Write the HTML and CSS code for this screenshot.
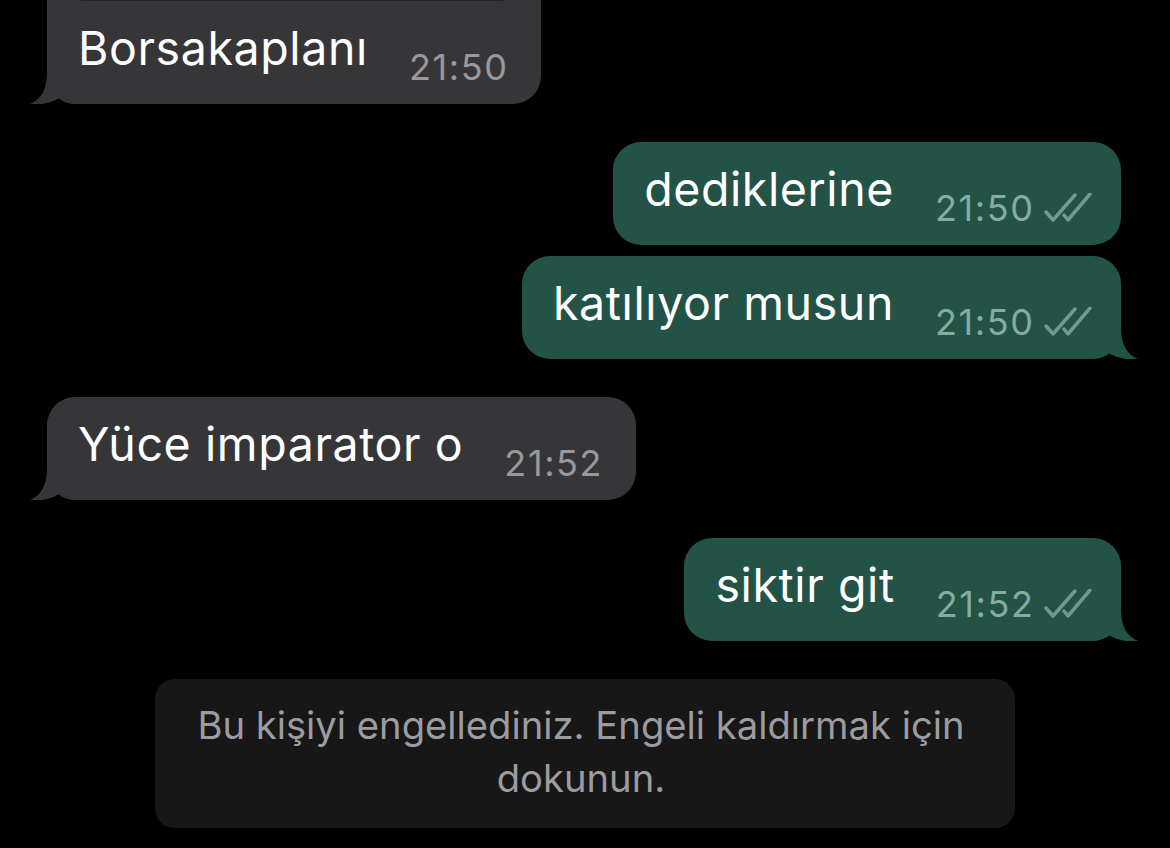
FILE: index.html
```html
<!DOCTYPE html>
<html lang="tr">
<head>
<meta charset="utf-8">
<link rel="stylesheet" href="styles.css">
</head>
<body>
<div class="chat">
  <div class="row in first">
    <div class="bubble dark tail">
      <div class="quote"></div>
      <div class="content">
        <span class="text">Borsakaplanı</span>
        <span class="meta"><span class="time">21:50</span></span>
      </div>
      <svg class="tail-svg" viewBox="0 0 50 40" width="50" height="40"><path d="M0,0 H30 V8 C30,26 36,35 47,40 C38,41 27,40 18,34 C13,38 7,40 0,40 Z"/></svg>
    </div>
  </div>

  <div class="row out gap-l">
    <div class="bubble green">
      <div class="content">
        <span class="text">dediklerine</span>
        <span class="meta"><span class="time">21:50</span>
          <svg class="ticks" viewBox="0 0 50 30" width="50" height="30"><path d="M4,19 L11,27 L33,2 M22,22 L26,27 L48,1"/></svg>
        </span>
      </div>
    </div>
  </div>

  <div class="row out gap-s">
    <div class="bubble green tail">
      <div class="content">
        <span class="text">katılıyor musun</span>
        <span class="meta"><span class="time">21:50</span>
          <svg class="ticks" viewBox="0 0 50 30" width="50" height="30"><path d="M4,19 L11,27 L33,2 M22,22 L26,27 L48,1"/></svg>
        </span>
      </div>
      <svg class="tail-svg" viewBox="0 0 50 40" width="50" height="40"><path d="M0,0 H30 V8 C30,26 36,35 47,40 C38,41 27,40 18,34 C13,38 7,40 0,40 Z"/></svg>
    </div>
  </div>

  <div class="row in gap-l">
    <div class="bubble dark tail">
      <div class="content">
        <span class="text">Yüce imparator o</span>
        <span class="meta"><span class="time">21:52</span></span>
      </div>
      <svg class="tail-svg" viewBox="0 0 50 40" width="50" height="40"><path d="M0,0 H30 V8 C30,26 36,35 47,40 C38,41 27,40 18,34 C13,38 7,40 0,40 Z"/></svg>
    </div>
  </div>

  <div class="row out gap-l">
    <div class="bubble green tail">
      <div class="content">
        <span class="text">siktir git</span>
        <span class="meta"><span class="time">21:52</span>
          <svg class="ticks" viewBox="0 0 50 30" width="50" height="30"><path d="M4,19 L11,27 L33,2 M22,22 L26,27 L48,1"/></svg>
        </span>
      </div>
      <svg class="tail-svg" viewBox="0 0 50 40" width="50" height="40"><path d="M0,0 H30 V8 C30,26 36,35 47,40 C38,41 27,40 18,34 C13,38 7,40 0,40 Z"/></svg>
    </div>
  </div>

  <div class="notice">Bu kişiyi engellediniz. Engeli kaldırmak için dokunun.</div>
</div>
</body>
</html>
```

FILE: styles.css
```css
* { box-sizing: border-box; }
html, body { margin: 0; padding: 0; background: #000; }
body {
  width: 1170px;
  height: 848px;
  overflow: hidden;
  font-family: Inter, "Noto Sans", sans-serif;
}
.chat {
  display: flex;
  flex-direction: column;
  margin-top: -61px;
}
.row { display: flex; }
.row.in { justify-content: flex-start; padding-left: 47px; }
.row.out { justify-content: flex-end; padding-right: 49px; }
.gap-l { margin-top: 38px; }
.gap-s { margin-top: 11px; }

.bubble {
  position: relative;
  border-radius: 28px;
  padding: 0 31px 0 31px;
}
.bubble.dark { background: #363638; padding-right: 34px; }
.bubble.green { background: #225346; padding-right: 29px; }

.quote {
  height: 62px;
  margin: 0 -8px 0 -8px;
  background: #252527;
  border-radius: 0 0 14px 14px;
}

.content {
  display: flex;
  align-items: flex-end;
  height: 103px;
  padding-bottom: 26px;
}
.text {
  color: #fff;
  font-size: 46.5px;
  line-height: 60px;
  letter-spacing: 0.6px;
}
.meta {
  display: flex;
  align-items: center;
  margin-left: 41px;
  margin-bottom: -7px;
  height: 36px;
}
.time {
  font-size: 36px;
  line-height: 36px;
  letter-spacing: 1.6px;
  margin-right: -1.6px;
}
.dark .time { color: #98989d; }
.green .time { color: #86aba1; }
.ticks {
  margin-left: 9px;
  fill: none;
  stroke: #6f9a8e;
  stroke-width: 3.5;
  stroke-linecap: round;
  stroke-linejoin: round;
}

.tail-svg {
  position: absolute;
  bottom: 0;
}
.out .tail-svg { right: -20px; }
.in .tail-svg { left: -20px; transform: scaleX(-1); }
.dark .tail-svg { fill: #363638; }
.green .tail-svg { fill: #225346; }

.notice {
  align-self: center;
  margin-top: 38px;
  width: 860px;
  height: 149px;
  background: #171717;
  border-radius: 20px;
  color: #9c9ca0;
  font-size: 38.2px;
  line-height: 53px;
  text-align: center;
  padding: 20px 28px 0 20px;
}
```
